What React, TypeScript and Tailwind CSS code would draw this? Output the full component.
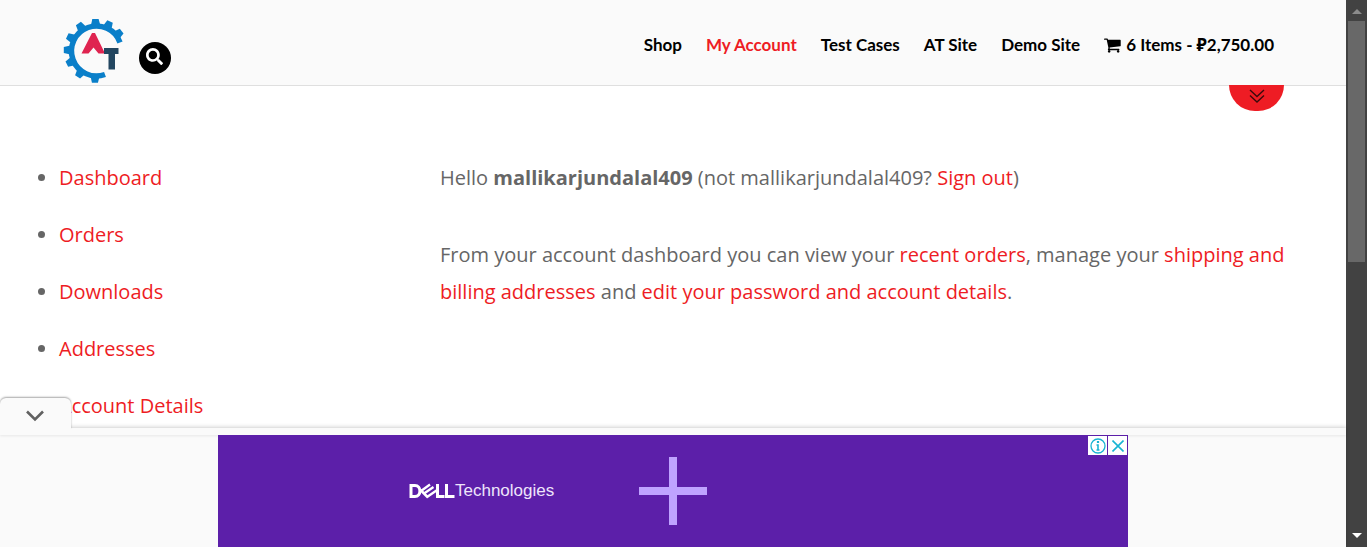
import React from "react";
import { FaSearch } from "react-icons/fa";

const navLinks = [
  { label: "Shop", active: false },
  { label: "My Account", active: true },
  { label: "Test Cases", active: false },
  { label: "AT Site", active: false },
  { label: "Demo Site", active: false },
];

const accountLinks = ["Dashboard", "Orders", "Downloads", "Addresses", "Account Details"];

const toothAngles = [-180, -154, -124, -92, -65, -38, 91, 124, 154];

function Logo() {
  return (
    <svg viewBox="0 0 62 64" className="h-16 w-[62px]" aria-hidden="true">
      <path d="M57 23.500 A25 25 0 1 0 42 55.500" fill="none" stroke="#0a7fc9" strokeWidth="5.500" />
      {toothAngles.map((angle) => (
        <path
          key={angle}
          d="M58.500 27.400 L65.200 29 V35 L58.500 36.600 Z"
          fill="#0a7fc9"
          transform={`rotate(${angle} 33 31.500)`}
        />
      ))}
      <path d="M29 14 H32 L42 34.500 H35.500 L30.500 28.500 L25.500 34.500 H18.500 Z" fill="#df2450" />
      <path d="M41 29 H55.500 V35 H52 V50.500 H45.500 V35 H41 Z" fill="#234660" />
    </svg>
  );
}

function CartIcon() {
  return (
    <svg viewBox="0 0 1792 1792" className="size-[18px]" fill="currentColor" aria-hidden="true">
      <path d="M640 1536q0 52-38 90t-90 38-90-38-38-90 38-90 90-38 90 38 38 90zm896 0q0 52-38 90t-90 38-90-38-38-90 38-90 90-38 90 38 38 90zm128-1088v512q0 24-16.500 42.500t-40.500 21.500l-1044 122q13 60 13 70 0 16-24 64h920q26 0 45 19t19 45-19 45-45 19h-1024q-26 0-45-19t-19-45q0-11 8-31.500t16-36 21.500-40 15.500-29.500l-177-823h-204q-26 0-45-19t-19-45 19-45 45-19h256q16 0 28.500 6.500t19.500 15.500 13 24.500 8 26 5.500 29.500 4.500 26h1201q26 0 45 19t19 45z" />
    </svg>
  );
}

function SiteHeader() {
  return (
    <header className="relative z-10 flex h-[86px] shrink-0 items-center border-b border-[#dfdfdf] bg-[#fafafa] pl-[63px] pr-[72px]">
      <a href="#home" aria-label="Home" className="mt-4 block">
        <Logo />
      </a>
      <button
        type="button"
        aria-label="Search"
        className="ml-3.5 mt-[30px] flex size-8 items-center justify-center rounded-full bg-black text-white"
      >
        <FaSearch className="mb-0.5 mr-0.5 size-[17px]" />
      </button>
      <nav
        aria-label="Main"
        className="ml-auto mt-1 flex items-center gap-6 whitespace-nowrap font-['Lato','Noto_Sans',sans-serif] text-[17px] font-bold leading-6 text-black"
      >
        {navLinks.map((link) => (
          <a key={link.label} href="#nav" className={link.active ? "text-[#ee1c24]" : ""}>
            {link.label}
          </a>
        ))}
        <a href="#cart" className="flex items-center gap-1">
          <CartIcon />
          <span>6 Items - ₽2,750.00</span>
        </a>
      </nav>
      <button
        type="button"
        aria-label="Expand header"
        className="absolute right-[62px] top-[85px] flex h-[26px] w-[55px] items-center justify-center rounded-b-[28px] bg-[#ee1c24]"
      >
        <svg viewBox="0 0 16 14" className="mb-1 h-3.5 w-4" fill="none" stroke="#3a0a0c" strokeWidth="1.4">
          <path d="M1 1 L8 7.500 L15 1 M1 6.500 L8 13 L15 6.500" />
        </svg>
      </button>
    </header>
  );
}

function AccountContent() {
  return (
    <main className="flex min-h-0 flex-1 overflow-hidden bg-white px-[59px] pt-[73px] text-xl leading-[37px] text-[#666]">
      <ul className="w-[30%] shrink-0 list-none">
        {accountLinks.map((label) => (
          <li key={label} className="relative mb-5">
            <span className="absolute -left-[21px] top-[15px] size-[7px] rounded-full bg-[#666]" />
            <a href="#account" className="text-[#ee1c24]">
              {label}
            </a>
          </li>
        ))}
      </ul>
      <section className="ml-auto w-[847px] max-w-[70%]">
        <p className="mb-10">
          Hello <strong className="font-bold">mallikarjundalal409</strong> (not mallikarjundalal409?{" "}
          <a href="#signout" className="text-[#ee1c24]">Sign out</a>)
        </p>
        <p>
          From your account dashboard you can view your{" "}
          <a href="#orders" className="text-[#ee1c24]">recent orders</a>, manage your{" "}
          <a href="#addresses" className="text-[#ee1c24]">shipping and billing addresses</a> and{" "}
          <a href="#details" className="text-[#ee1c24]">edit your password and account details</a>.
        </p>
      </section>
    </main>
  );
}

function DellMark() {
  return (
    <svg viewBox="0 0 46 16" className="h-4 w-[46px]" fill="none" stroke="#fff" strokeWidth="3" aria-hidden="true">
      <path d="M2 2.500 H6 C12.500 2.500 12.500 13.500 6 13.500 H2 Z" />
      <path d="M12 8 L21 1.500 M15 10.500 L24.500 4 M18 14 L27.500 7.500" strokeWidth="2.300" />
      <path d="M11.500 7 L19 14.500" strokeWidth="2.500" />
      <path d="M28.500 1 V13.500 H35.500 M37.500 1 V13.500 H45.500" />
    </svg>
  );
}

function AdBar() {
  return (
    <aside aria-label="Advertisement" className="relative h-[119px] shrink-0 bg-[#fafafa] shadow-[0_-1px_4px_rgba(0,0,0,0.18)]">
      <button
        type="button"
        aria-label="Hide advertisement"
        className="absolute -top-[30px] left-0 flex h-[31px] w-[71px] items-center justify-center rounded-t-[6px] bg-[#fafafa] pr-0.5 shadow-[0_-1px_2px_rgba(0,0,0,0.35)] [clip-path:inset(-5px_-5px_0_0)]"
      >
        <svg viewBox="0 0 18 12" className="mt-1 h-3 w-[18px]" fill="none" stroke="#616161" strokeWidth="2.6">
          <path d="M1 1.500 L9 9.500 L17 1.500" />
        </svg>
      </button>
      <div className="h-[7px] shadow-[0_1px_3px_rgba(0,0,0,0.08)]" />
      <div className="relative mx-auto flex h-28 w-[910px] max-w-full bg-[#5c1fa9] pl-[191px]">
        <div className="mt-12 flex h-4 items-center">
          <DellMark />
          <span className="font-['Liberation_Sans',sans-serif] text-[17px] leading-5 text-[#eee5fb]">
            Technologies
          </span>
        </div>
        <svg viewBox="0 0 68 68" className="absolute left-[421px] top-[22px] size-[68px]" fill="#bfa3ff" aria-hidden="true">
          <path d="M30 0 H38 V30 H68 V38 H38 V68 H30 V38 H0 V30 H30 Z" />
        </svg>
        <div className="absolute right-px top-px flex gap-px">
          <button type="button" aria-label="Ad information" className="flex size-[19px] items-center justify-center bg-white">
            <svg viewBox="0 0 16 16" className="size-4" fill="none" stroke="#18b4d3">
              <circle cx="8" cy="8" r="7" strokeWidth="1.300" />
              <path d="M8 3 V5" strokeWidth="2.200" />
              <path d="M6.500 7 H8 V12 M6.500 12 H9.500" strokeWidth="1.600" />
            </svg>
          </button>
          <button type="button" aria-label="Close ad" className="flex size-[19px] items-center justify-center bg-white">
            <svg viewBox="0 0 12 12" className="size-3" fill="none" stroke="#18b4d3" strokeWidth="1.600">
              <path d="M0.500 0.500 L11.500 11.500 M11.500 0.500 L0.500 11.500" />
            </svg>
          </button>
        </div>
      </div>
    </aside>
  );
}

function ScrollTrack() {
  return (
    <div className="flex w-[21px] shrink-0 flex-col items-center bg-[#424242]" aria-hidden="true">
      <svg viewBox="0 0 10 5" className="mt-[9px] h-[5px] w-2.5" fill="#8b8b8b">
        <path d="M5 0 L10 5 H0 Z" />
      </svg>
      <div className="mt-[7px] h-[44%] w-[17px] bg-[#686868]" />
      <svg viewBox="0 0 10 5" className="mb-[9px] mt-auto h-[5px] w-2.5" fill="#fff">
        <path d="M0 0 H10 L5 5 Z" />
      </svg>
    </div>
  );
}

export default function App() {
  return (
    <div className="flex h-screen overflow-hidden font-['Open_Sans',sans-serif]">
      <div className="flex min-w-0 flex-1 flex-col">
        <SiteHeader />
        <AccountContent />
        <AdBar />
      </div>
      <ScrollTrack />
    </div>
  );
}
